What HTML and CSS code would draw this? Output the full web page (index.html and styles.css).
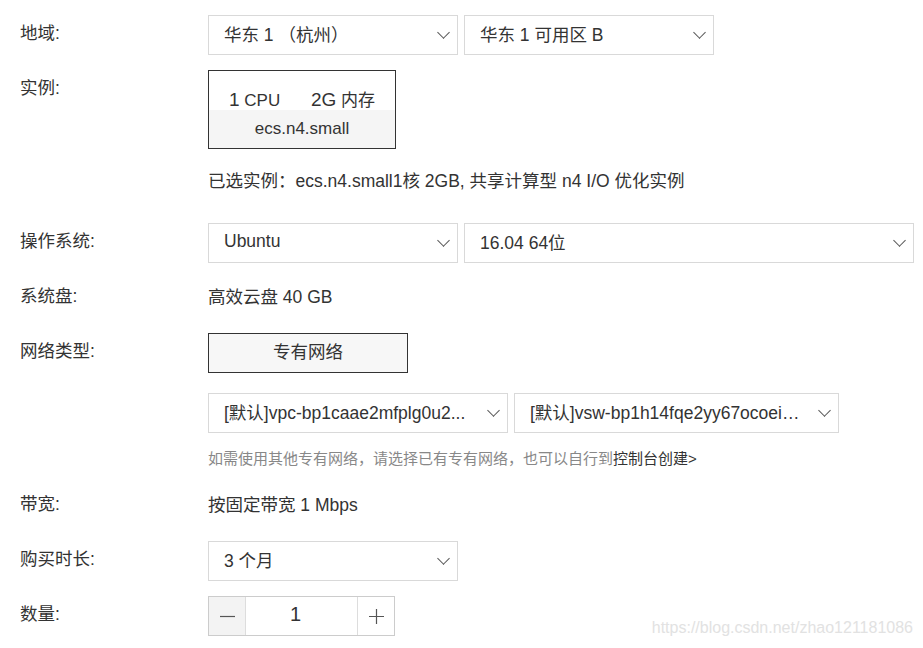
FILE: index.html
```html
<!DOCTYPE html>
<html lang="zh-CN">
<head>
    <meta charset="UTF-8">
    <meta name="viewport" content="width=device-width, initial-scale=1.0">
    <title>购买实例</title>
    <link rel="stylesheet" href="styles.css">
</head>
<body>
<main class="buy">
    <!-- 地域 -->
    <div class="row">
        <div class="label">地域:</div>
        <div class="field">
            <div class="select w250"><span>华东 1 （杭州）</span><i class="arrow"></i></div>
            <div class="select w250"><span>华东 1 可用区 B</span><i class="arrow"></i></div>
        </div>
    </div>
    <!-- 实例 -->
    <div class="row">
        <div class="label">实例:</div>
        <div class="field">
            <div class="spec">
                <div class="spec-top"><b>1</b> CPU <b class="ml">2G</b> 内存</div>
                <div class="spec-bottom">ecs.n4.small</div>
            </div>
        </div>
    </div>
    <div class="row row-text picked">
        <div class="label"></div>
        <div class="field">已选实例：ecs.n4.small1核 2GB, 共享计算型 n4 I/O 优化实例</div>
    </div>
    <!-- 操作系统 -->
    <div class="row">
        <div class="label">操作系统:</div>
        <div class="field">
            <div class="select w250"><span>Ubuntu</span><i class="arrow"></i></div>
            <div class="select w450"><span>16.04 64位</span><i class="arrow"></i></div>
        </div>
    </div>
    <div class="row row-text">
        <div class="label">系统盘:</div>
        <div class="field">高效云盘 40 GB</div>
    </div>
    <!-- 网络 -->
    <div class="row net">
        <div class="label">网络类型:</div>
        <div class="field">
            <div class="btn">专有网络</div>
        </div>
    </div>
    <div class="row vpc">
        <div class="label"></div>
        <div class="field">
            <div class="select w300"><span>[默认]vpc-bp1caae2mfplg0u2...</span><i class="arrow"></i></div>
            <div class="select w325"><span>[默认]vsw-bp1h14fqe2yy67ocoei…</span><i class="arrow"></i></div>
        </div>
    </div>
    <div class="row tip">
        <div class="label"></div>
        <p class="tip-text">如需使用其他专有网络，请选择已有专有网络，也可以自行到<a href="#">控制台创建&gt;</a></p>
    </div>
    <div class="row row-text">
        <div class="label">带宽:</div>
        <div class="field">按固定带宽 1 Mbps</div>
    </div>
    <div class="row">
        <div class="label">购买时长:</div>
        <div class="field">
            <div class="select w250"><span>3 个月</span><i class="arrow"></i></div>
        </div>
    </div>
    <div class="row">
        <div class="label">数量:</div>
        <div class="field">
            <div class="stepper">
                <span class="minus"><svg width="15" height="15" viewBox="0 0 15 15"><path d="M0 7.5h15" stroke="#555" stroke-width="1.2"/></svg></span>
                <span class="num">1</span>
                <span class="plus"><svg width="15" height="15" viewBox="0 0 15 15"><path d="M0 7.5h15M7.5 0v15" stroke="#555" stroke-width="1.2"/></svg></span>
            </div>
        </div>
    </div>
</main>
<div class="mark">https://blog.csdn.net/zhao121181086</div>
</body>
</html>
```

FILE: styles.css
```css
* { margin: 0; padding: 0; box-sizing: border-box; }
body { font-family: "Liberation Sans", "Noto Sans CJK SC", sans-serif; font-size: 17.5px; color: #333; background: #fff; }
.buy { display: flex; flex-direction: column; padding: 15px 0 0 20px; }
.row { display: flex; margin-bottom: 15px; }
.label { width: 188px; flex: none; height: 40px; line-height: 37px; }
.field { display: flex; gap: 6px; }
.row-text .field { line-height: 38px; height: 40px; }
.picked { margin-bottom: 23px; }
.picked .label, .picked .field { height: 36px; line-height: 35px; }
.net { margin-bottom: 20px; }
.vpc { margin-bottom: 16px; }
.tip { margin-bottom: 17px; }
.tip .label { height: 20px; }
.tip-text { font-size: 15px; color: #888; line-height: 20px; }
.tip-text a { color: #333; text-decoration: none; }

.select { height: 40px; border: 1px solid #d9d9d9; display: flex; align-items: center; justify-content: space-between; padding: 0 8px 3px 15px; white-space: nowrap; }
.select span { overflow: hidden; text-overflow: ellipsis; }
.w250 { width: 250px; }
.w300 { width: 300px; }
.w325 { width: 325px; }
.w450 { width: 450px; }
.arrow { width: 9px; height: 9px; border-right: 1px solid #555; border-bottom: 1px solid #555; transform: rotate(45deg); margin: -2px 1px 0 10px; flex: none; }

.spec { width: 188px; height: 79px; border: 1px solid #333; text-align: center; }
.spec-top { height: 39px; padding-top: 18px; line-height: 22px; background: #fff; font-size: 17px; }
.spec-top b { font-weight: normal; font-size: 19px; }
.spec-top .ml { margin-left: 26px; }
.spec-bottom { height: 38px; line-height: 37px; background: #f5f5f5; font-size: 17px; }

.btn { width: 200px; height: 40px; line-height: 37px; border: 1px solid #333; background: #f7f7f7; text-align: center; }

.stepper { width: 187px; height: 40px; border: 1px solid #ccc; display: flex; }
.stepper span { display: flex; align-items: center; justify-content: center; height: 38px; }
.minus { width: 37px; background: #f3f3f3; border-right: 1px solid #ddd; }
.num { width: 111px; font-size: 20px; padding: 0 12px 3px 0; }
.plus { width: 37px; border-left: 1px solid #ddd; }

.mark { position: absolute; right: 10px; top: 619px; font-size: 16px; color: #e2e2e2; }
```
